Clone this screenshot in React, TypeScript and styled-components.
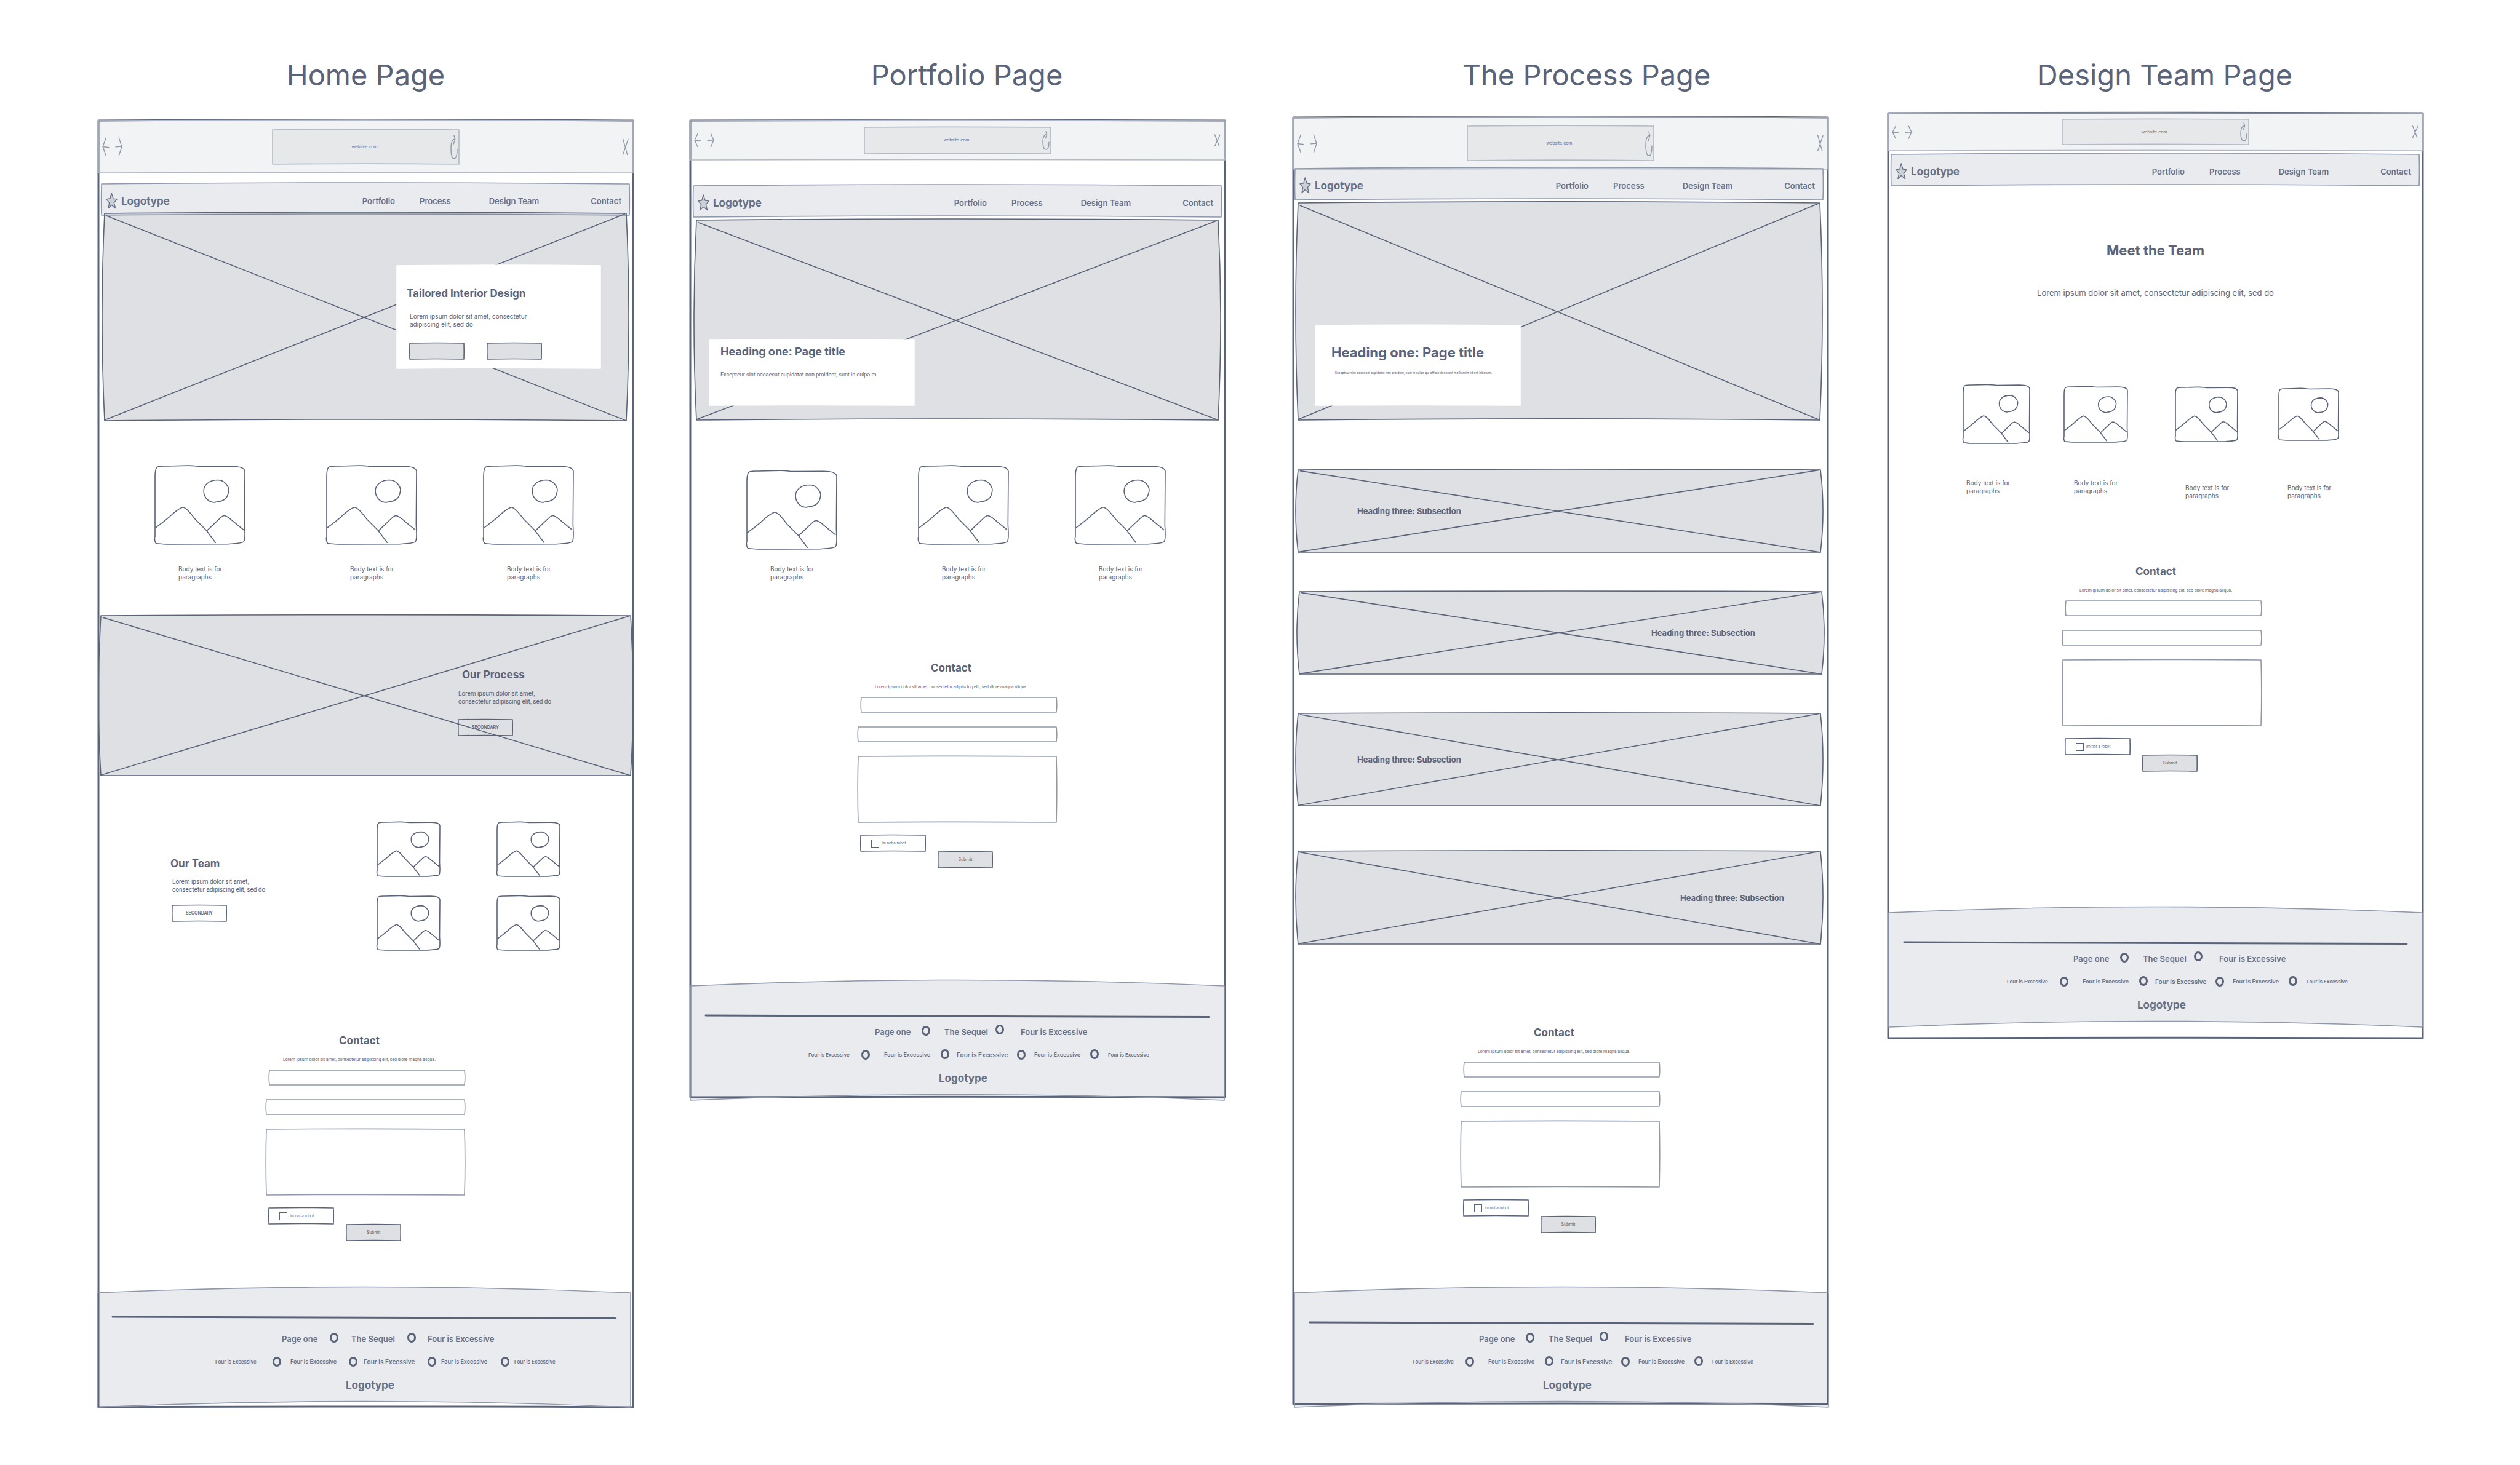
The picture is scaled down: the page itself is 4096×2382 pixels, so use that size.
import React from "react";
import styled, { createGlobalStyle } from "styled-components";

const ink = "#5a6378";
const navInk = "#667086";
const softInk = "#8f98ab";
const faintInk = "#b4bac6";
const fill = "rgba(90, 99, 120, 0.2)";
const paleFill = "rgba(90, 99, 120, 0.13)";
const barFill = "rgba(90, 99, 120, 0.08)";

const GlobalStyle = createGlobalStyle`
  * { box-sizing: border-box; }
  body { margin: 0; background: #fff; }
  h1, h2, h3, h4, p, figure { margin: 0; }
  button, input, textarea { font: inherit; color: inherit; background: transparent; border: 0; padding: 0; margin: 0; outline: 0; }
`;

/* ---------- hand-drawn outlines ---------- */

const OutlineSvg = styled.svg`
  position: absolute;
  inset: 0;
  width: 100%;
  height: 100%;
  overflow: visible;
  z-index: -1;
  pointer-events: none;
  stroke-linejoin: round;
  stroke-linecap: round;
`;

type OutlineProps = {
  stroke?: string;
  width?: number;
  fill?: string;
  top?: number;
  side?: number;
  bottom?: number;
  cross?: boolean;
};

/* A rectangle whose edges bow by a percentage of its own size. */
function Outline({ stroke = ink, width = 1.6, fill: paint = "none", top = 0, side = 0, bottom = 0, cross }: OutlineProps) {
  const edge = `M0 0 Q50 ${-top} 100 0 Q${100 + side} 50 100 100 Q50 ${100 - bottom} 0 100 Q${-side} 50 0 0Z`;
  return (
    <OutlineSvg viewBox="0 0 100 100" preserveAspectRatio="none" aria-hidden="true">
      <path d={edge} fill={paint} stroke={stroke} strokeWidth={width} vectorEffect="non-scaling-stroke" />
      {cross && (
        <path d="M0.4 1.2 L100 100 M0 99.7 L99.7 0.3" fill="none" stroke={stroke} strokeWidth={width} vectorEffect="non-scaling-stroke" />
      )}
    </OutlineSvg>
  );
}

/* ---------- board ---------- */

const Board = styled.main`
  display: flex;
  align-items: flex-start;
  padding: 92px 158px 92px 160px;
  font-family: Inter, "Liberation Sans", sans-serif;
  color: ${ink};
`;

const Column = styled.section<{ $before?: number }>`
  flex: 1;
  min-width: 0;
  margin-left: ${(p) => p.$before ?? 0}px;
`;

const ColumnTitle = styled.h1<{ $shift?: number; $below: number }>`
  font-size: 47px;
  line-height: 60px;
  font-weight: 400;
  text-align: center;
  white-space: nowrap;
  padding-left: ${(p) => p.$shift ?? 0}px;
  margin-bottom: ${(p) => p.$below}px;
`;

const Frame = styled.article<{ $tail?: number }>`
  position: relative;
  isolation: isolate;
  display: flex;
  flex-direction: column;
  padding-bottom: ${(p) => p.$tail ?? 0}px;
`;

/* ---------- browser bar ---------- */

const Toolbar = styled.div<{ $height: number }>`
  position: relative;
  isolation: isolate;
  display: grid;
  grid-template-columns: 1fr minmax(0, 303px) 1fr;
  align-items: center;
  height: ${(p) => p.$height}px;
  padding: 0 8px 0 7px;
  color: ${softInk};
`;

const Arrows = styled.div`
  display: flex;
  gap: 11px;
`;

const IconButton = styled.button`
  display: flex;
`;

const UrlBar = styled.div<{ $height: number }>`
  position: relative;
  isolation: isolate;
  display: grid;
  grid-template-columns: 1fr auto 1fr;
  align-items: center;
  height: ${(p) => p.$height}px;
  padding-right: 3px;
  font-size: 7px;
  line-height: 10px;
  color: ${navInk};
`;

const Address = styled.span`
  grid-column: 2;
`;

const BarEnd = styled.div`
  display: flex;
  justify-content: flex-end;
  color: ${softInk};
`;

const Glyph = styled.svg<{ $w: number; $h: number }>`
  display: block;
  width: ${(p) => p.$w}px;
  height: ${(p) => p.$h}px;
  overflow: visible;
  fill: none;
  stroke: currentColor;
  stroke-width: 1.4px;
  stroke-linecap: round;
  stroke-linejoin: round;
  path { vector-effect: non-scaling-stroke; }
`;

function BrowserBar({ height, url, icon, reload, close }: { height: number; url: number; icon: number; reload: number; close: number }) {
  return (
    <Toolbar $height={height}>
      <Outline stroke={faintInk} fill={barFill} top={2} bottom={2} />
      <Arrows>
        <IconButton aria-label="Back">
          <Glyph $w={10} $h={icon} viewBox="0 0 17 72" preserveAspectRatio="none">
            <path d="M9 0 L0 36 L9 72 M0 36 L17 39" />
          </Glyph>
        </IconButton>
        <IconButton aria-label="Forward">
          <Glyph $w={10} $h={icon} viewBox="0 0 17 72" preserveAspectRatio="none">
            <path d="M9 0 L17 36 L9 72 M0 37 L17 35" />
          </Glyph>
        </IconButton>
      </Arrows>
      <UrlBar $height={url}>
        <Outline stroke={faintInk} fill={barFill} top={3} bottom={3} />
        <Address>website.com</Address>
        <BarEnd>
          <IconButton aria-label="Reload">
            <Glyph $w={10} $h={reload} viewBox="0 0 18 96" preserveAspectRatio="none">
              <path d="M18 57 C18 80 16 96 9 96 C2 96 0 75 0 54 C0 30 4 14 12 16 M9 0 L12 16 L8 35" />
            </Glyph>
          </IconButton>
        </BarEnd>
      </UrlBar>
      <BarEnd>
        <IconButton aria-label="Close">
          <Glyph $w={9} $h={close} viewBox="0 0 15 64" preserveAspectRatio="none">
            <path d="M1 0 L13 63 M15 1 L1 62" />
          </Glyph>
        </IconButton>
      </BarEnd>
    </Toolbar>
  );
}

/* ---------- site navigation ---------- */

const Nav = styled.nav<{ $mt: number; $left: number; $right: number }>`
  position: relative;
  isolation: isolate;
  display: flex;
  align-items: center;
  height: 51px;
  margin: ${(p) => p.$mt}px ${(p) => p.$right}px 0 ${(p) => p.$left}px;
  padding: 4px 13px 0 8px;
  color: ${navInk};
`;

const Brand = styled.a`
  display: flex;
  align-items: center;
  gap: 7px;
  margin-right: auto;
  font-size: 17px;
  line-height: 24px;
  font-weight: 700;
  color: inherit;
  text-decoration: none;
`;

const NavLink = styled.a<{ $gap?: number }>`
  margin-left: ${(p) => p.$gap ?? 0}px;
  font-size: 13px;
  line-height: 18px;
  font-weight: 600;
  color: inherit;
  text-decoration: none;
  white-space: nowrap;
`;

function SiteNav({ mt, left = 5, right = 6 }: { mt: number; left?: number; right?: number }) {
  return (
    <Nav $mt={mt} $left={left} $right={right} aria-label="Site">
      <Outline stroke={softInk} fill={paleFill} top={8} bottom={8} side={0.1} />
      <Brand href="#home">
        <Glyph $w={17} $h={25} viewBox="0 0 29 63" preserveAspectRatio="none" aria-hidden="true">
          <path
            d="M14 0 L19 23 L29 25 L21 40 L25 62 L14 49 L5 62 L8 40 L0 25 L10 22 Z"
            fill="#cbd0d7"
          />
        </Glyph>
        Logotype
      </Brand>
      <NavLink href="#portfolio">Portfolio</NavLink>
      <NavLink href="#process" $gap={40}>Process</NavLink>
      <NavLink href="#team" $gap={62}>Design Team</NavLink>
      <NavLink href="#contact" $gap={84}>Contact</NavLink>
    </Nav>
  );
}

/* ---------- image areas ---------- */

const Hero = styled.header<{ $mt: number; $height: number; $left?: number; $right?: number }>`
  position: relative;
  isolation: isolate;
  min-height: ${(p) => p.$height}px;
  margin: ${(p) => p.$mt}px ${(p) => p.$right ?? 11}px 0 ${(p) => p.$left ?? 10}px;
  display: flex;
  align-items: flex-start;
`;

const HeroCard = styled.div<{ $x: number; $y: number; $w: number; $h: number; $pad: string }>`
  position: relative;
  isolation: isolate;
  width: ${(p) => p.$w}px;
  min-height: ${(p) => p.$h}px;
  margin: ${(p) => p.$y}px 0 0 ${(p) => p.$x}px;
  padding: ${(p) => p.$pad};
`;

const Heading = styled.h2<{ $size?: number; $line?: number; $mt?: number; $left?: number; $center?: boolean }>`
  font-size: ${(p) => p.$size ?? 17}px;
  line-height: ${(p) => p.$line ?? 24}px;
  font-weight: 700;
  white-space: nowrap;
  margin: ${(p) => p.$mt ?? 0}px 0 0 ${(p) => p.$left ?? 0}px;
  text-align: ${(p) => (p.$center ? "center" : "left")};
`;

const BandHeading = styled.h3`
  font-size: 13px;
  line-height: 18px;
  font-weight: 700;
  white-space: nowrap;
`;

const Text = styled.p<{ $size?: number; $line?: number; $mt?: number; $left?: number; $center?: boolean }>`
  font-size: ${(p) => p.$size ?? 10}px;
  line-height: ${(p) => p.$line ?? 13}px;
  white-space: nowrap;
  margin: ${(p) => p.$mt ?? 0}px 0 0 ${(p) => p.$left ?? 0}px;
  text-align: ${(p) => (p.$center ? "center" : "left")};
`;

const NarrowText = styled(Text)`
  font-family: Roboto, "Liberation Sans", sans-serif;
`;

const ButtonRow = styled.div`
  display: flex;
  gap: 38px;
  margin: 24px 0 0 5px;
`;

const SketchButton = styled.button<{ $mt?: number; $left?: number; $strong?: boolean }>`
  position: relative;
  isolation: isolate;
  display: block;
  width: 88px;
  height: 26px;
  margin: ${(p) => p.$mt ?? 0}px 0 0 ${(p) => p.$left ?? 0}px;
  font-size: 7px;
  line-height: 10px;
  font-weight: ${(p) => (p.$strong ? 600 : 400)};
`;

const Band = styled.section<{ $mt: number; $height: number; $left?: number; $right?: number; $indent: number }>`
  position: relative;
  isolation: isolate;
  display: flex;
  align-items: center;
  min-height: ${(p) => p.$height}px;
  margin: ${(p) => p.$mt}px ${(p) => p.$right ?? 12}px 0 ${(p) => p.$left ?? 8}px;
  padding-left: ${(p) => p.$indent}px;
`;

const PictureSvg = styled.svg<{ $w: number; $h: number }>`
  display: block;
  width: ${(p) => p.$w}px;
  height: ${(p) => p.$h}px;
  overflow: visible;
  fill: none;
  stroke: ${ink};
  stroke-width: 1.6px;
  stroke-linecap: round;
  stroke-linejoin: round;
  path { vector-effect: non-scaling-stroke; }
`;

function Picture({ w, h }: { w: number; h: number }) {
  return (
    <PictureSvg $w={w} $h={h} viewBox="0 0 668 580" preserveAspectRatio="none" role="img" aria-label="Image">
      <path d="M0 525 V80 C0 40 5 10 20 5 C40 -2 60 0 90 0 L240 -4 C300 -5 310 3 340 3 L560 1 C620 0 665 10 668 38 L665 430 C666 470 675 540 660 560 C650 575 580 574 540 579 L90 580 C50 578 20 575 8 573 C-2 565 -3 550 -3 530" />
      <path d="M448 269 C400 270 362 235 362 183 C362 140 400 103 470 103 C515 105 545 145 549 175 C545 215 535 262 450 266" />
      <path d="M4 457 L60 415 L105 378 C150 335 180 315 205 305 C235 310 260 345 300 395 L380 475 L450 567" />
      <path d="M388 477 L490 380 C510 362 520 365 545 380 L600 425 L658 472" />
    </PictureSvg>
  );
}

const CardRow = styled.div<{ $mt: number; $left: number }>`
  display: flex;
  align-items: flex-start;
  margin: ${(p) => p.$mt}px 0 0 ${(p) => p.$left}px;
`;

const Card = styled.figure<{ $before?: number }>`
  margin-left: ${(p) => p.$before ?? 0}px;
`;

const PictureSlot = styled.div<{ $height: number; $drop?: number }>`
  display: flex;
  align-items: center;
  height: ${(p) => p.$height}px;
  padding-top: ${(p) => p.$drop ?? 0}px;
`;

const Caption = styled.figcaption<{ $mt: number; $left: number }>`
  margin-top: ${(p) => p.$mt}px;
  padding-left: ${(p) => p.$left}px;
  font-size: 10px;
  line-height: 13px;
  white-space: nowrap;
`;

function CaptionText() {
  return (
    <>
      Body text is for
      <br />
      paragraphs
    </>
  );
}

function ThreeCards({ mt, drop = 0 }: { mt: number; drop?: number }) {
  return (
    <CardRow $mt={mt} $left={92}>
      {[0, 133, 109].map((before, i) => (
        <Card key={i} $before={before}>
          <PictureSlot $height={i === 0 ? 127 + drop : 127} $drop={i === 0 ? drop : 0}>
            <Picture w={146} h={127} />
          </PictureSlot>
          <Caption $mt={i === 0 ? 34 - drop : 34} $left={38}>
            <CaptionText />
          </Caption>
        </Card>
      ))}
    </CardRow>
  );
}

/* ---------- contact form ---------- */

const ContactForm = styled.form<{ $mt: number; $left: number }>`
  width: 322px;
  margin: ${(p) => p.$mt}px 0 0 ${(p) => p.$left}px;
`;

const ContactHead = styled.div`
  padding-right: 20px;
`;

const Field = styled.div<{ $mt: number; $height: number; $left?: number }>`
  position: relative;
  isolation: isolate;
  display: flex;
  height: ${(p) => p.$height}px;
  margin: ${(p) => p.$mt}px 0 0 ${(p) => p.$left ?? 0}px;
`;

const TextInput = styled.input`
  flex: 1;
  padding: 0 6px;
  font-size: 10px;
`;

const TextArea = styled.textarea`
  flex: 1;
  padding: 6px;
  font-size: 10px;
  resize: none;
`;

const RobotCheck = styled.label`
  position: relative;
  isolation: isolate;
  display: flex;
  align-items: center;
  gap: 4px;
  width: 105px;
  height: 26px;
  margin: 21px 0 0 4px;
  padding-left: 17px;
  font-size: 6px;
  line-height: 8px;
`;

const CheckBox = styled.input`
  appearance: none;
  width: 13px;
  height: 13px;
  border: 1px solid ${ink};
`;

function Contact({ mt, left = 273 }: { mt: number; left?: number }) {
  return (
    <ContactForm $mt={mt} $left={left}>
      <ContactHead>
        <Heading $center>Contact</Heading>
        <NarrowText $size={7} $line={12} $mt={13} $center>
          Lorem ipsum dolor sit amet, consectetur adipiscing elit, sed dlore magna aliqua.
        </NarrowText>
      </ContactHead>
      <Field $mt={11} $height={24} $left={5}>
        <Outline stroke={softInk} side={0.5} />
        <TextInput type="text" aria-label="Name" />
      </Field>
      <Field $mt={24} $height={24}>
        <Outline stroke={softInk} side={0.5} />
        <TextInput type="email" aria-label="Email" />
      </Field>
      <Field $mt={24} $height={107}>
        <Outline stroke={softInk} side={0.5} top={1.2} bottom={1.2} />
        <TextArea aria-label="Message" />
      </Field>
      <RobotCheck>
        <Outline top={4} bottom={4} side={0.5} />
        <CheckBox type="checkbox" />
        Im not a robot
      </RobotCheck>
      <SketchButton type="button" $mt={1} $left={130}>
        <Outline fill={fill} top={4} bottom={4} side={0.5} />
        Submit
      </SketchButton>
    </ContactForm>
  );
}

/* ---------- footer ---------- */

const FooterBox = styled.footer<{ $mt: number; $mb?: number; $left?: number; $right?: number }>`
  position: relative;
  isolation: isolate;
  min-height: 186px;
  margin: ${(p) => p.$mt}px ${(p) => p.$right ?? 0}px ${(p) => p.$mb ?? 0}px ${(p) => p.$left ?? 0}px;
  padding: 0 25px 24px;
  color: ${navInk};
`;

const Rule = styled.svg<{ $above: number; $below: number }>`
  display: block;
  width: 100%;
  height: 4px;
  margin: ${(p) => p.$above}px 0 ${(p) => p.$below}px;
  overflow: visible;
  stroke: ${ink};
  stroke-width: 3px;
  stroke-linecap: round;
`;

const FooterBody = styled.div`
  display: flow-root;
`;

const LinkRow = styled.div<{ $columns: string; $left: number; $mt?: number; $height: number }>`
  display: grid;
  grid-template-columns: ${(p) => p.$columns};
  align-items: center;
  height: ${(p) => p.$height}px;
  margin: ${(p) => p.$mt ?? 0}px 0 0 ${(p) => p.$left}px;
`;

const FooterLink = styled.a<{ $size: number }>`
  font-size: ${(p) => p.$size}px;
  line-height: 18px;
  font-weight: 600;
  color: inherit;
  text-decoration: none;
  white-space: nowrap;
`;

const Dot = styled.span<{ $raised?: boolean; $lift?: number }>`
  width: 14px;
  height: 16px;
  border: 3px solid ${ink};
  border-radius: 50%;
  align-self: ${(p) => (p.$raised ? "start" : "center")};
  margin-bottom: ${(p) => (p.$raised ? 0 : p.$lift ?? 0)}px;
`;

const FooterLogo = styled.div`
  margin: 17px 0 0 379px;
  font-size: 17px;
  line-height: 24px;
  font-weight: 700;
`;

type FooterProps = { mt: number; mb?: number; left?: number; right?: number; even?: boolean };

function Footer({ mt, mb, left, right, even }: FooterProps) {
  const topColumns = even ? "78px 35px 91px 33px auto" : "76px 37px 83px 41px auto";
  const lowColumns = even
    ? "93px 29px 95px 24px 104px 22px 97px 22px auto"
    : "86px 37px 92px 26px 98px 28px 91px 29px auto";
  return (
    <FooterBox $mt={mt} $mb={mb} $left={left} $right={right}>
      <Outline stroke={softInk} fill={paleFill} top={10.2} bottom={10.2} />
      <FooterBody>
        <Rule $above={even ? 38 : 47} $below={even ? 21 : 12} viewBox="0 0 100 4" preserveAspectRatio="none" aria-hidden="true">
          <path d="M0 1 L100 3.5" vectorEffect="non-scaling-stroke" />
        </Rule>
        <LinkRow $columns={topColumns} $left={275} $height={24}>
          <FooterLink href="#one" $size={13}>Page one</FooterLink>
          <Dot $lift={4} />
          <FooterLink href="#two" $size={13}>The Sequel</FooterLink>
          <Dot $lift={4} $raised={!even} />
          <FooterLink href="#four" $size={13}>Four is Excessive</FooterLink>
        </LinkRow>
        <LinkRow $columns={lowColumns} $left={167} $mt={16} $height={18}>
          <FooterLink href="#a" $size={8}>Four is Excessive</FooterLink>
          <Dot />
          <FooterLink href="#b" $size={9}>Four is Excessive</FooterLink>
          <Dot $raised={!even} />
          <FooterLink href="#c" $size={10}>Four is Excessive</FooterLink>
          <Dot />
          <FooterLink href="#d" $size={9}>Four is Excessive</FooterLink>
          <Dot $raised={!even} />
          <FooterLink href="#e" $size={8}>Four is Excessive</FooterLink>
        </LinkRow>
        <FooterLogo>Logotype</FooterLogo>
      </FooterBody>
    </FooterBox>
  );
}

/* ---------- pages ---------- */

const ProcessPanel = styled.section`
  position: relative;
  isolation: isolate;
  min-height: 260px;
  margin: 56px 4px 0;
  padding: 84px 0 0 581px;
`;

const TeamSection = styled.section`
  display: grid;
  grid-template-columns: 336px auto;
  margin: 76px 0 0 117px;
`;

const TeamIntro = styled.div`
  padding-top: 55px;
`;

const TeamGrid = styled.div`
  display: grid;
  grid-template-columns: 102px 102px;
  gap: 32px 93px;
`;

function Secondary({ mt, left = 0 }: { mt: number; left?: number }) {
  return (
    <SketchButton type="button" $strong $mt={mt} $left={left}>
      <Outline top={4} bottom={4} side={0.5} />
      SECONDARY
    </SketchButton>
  );
}

function HomePage() {
  return (
    <Frame>
      <Outline width={3} top={0.1} bottom={0.1} />
      <BrowserBar height={85} url={56} icon={29} reload={38} close={26} />
      <SiteNav mt={18} />
      <Hero $mt={-3} $height={337}>
        <Outline fill={fill} top={1.2} bottom={1.2} side={0.95} cross />
        <HeroCard $x={475} $y={85} $w={331} $h={167} $pad="33px 0 0 16px">
          <Outline fill="#fff" stroke="#fff" top={1} bottom={1} />
          <Heading>Tailored Interior Design</Heading>
          <Text $mt={19} $left={5}>
            Lorem ipsum dolor sit amet, consectetur
            <br />
            adipiscing elit, sed do
          </Text>
          <ButtonRow>
            <SketchButton type="button" aria-label="Primary action">
              <Outline fill={fill} top={4} bottom={4} side={0.5} />
            </SketchButton>
            <SketchButton type="button" aria-label="Secondary action">
              <Outline fill={fill} top={4} bottom={4} side={0.5} />
            </SketchButton>
          </ButtonRow>
        </HeroCard>
      </Hero>
      <ThreeCards mt={74} />
      <ProcessPanel>
        <Outline fill={fill} top={1} side={0.95} cross />
        <Heading $left={6}>Our Process</Heading>
        <NarrowText $mt={12}>
          Lorem ipsum dolor sit amet,
          <br />
          consectetur adipiscing elit, sed do
        </NarrowText>
        <Secondary mt={23} />
      </ProcessPanel>
      <TeamSection>
        <TeamIntro>
          <Heading>Our Team</Heading>
          <NarrowText $mt={11} $left={3}>
            Lorem ipsum dolor sit amet,
            <br />
            consectetur adipiscing elit, sed do
          </NarrowText>
          <Secondary mt={19} left={3} />
        </TeamIntro>
        <TeamGrid>
          {[1, 2, 3, 4].map((n) => (
            <Picture key={n} w={102} h={88} />
          ))}
        </TeamGrid>
      </TeamSection>
      <Contact mt={135} />
      <Footer mt={85} left={-2} right={4} even />
    </Frame>
  );
}

function PortfolioPage() {
  return (
    <Frame>
      <Outline width={3} top={0.1} bottom={0.1} />
      <BrowserBar height={64} url={43} icon={22} reload={29} close={19} />
      <SiteNav mt={42} />
      <Hero $mt={5} $height={325}>
        <Outline fill={fill} top={1.2} bottom={1.2} side={0.95} cross />
        <HeroCard $x={21} $y={195} $w={333} $h={106} $pad="7px 0 0 18px">
          <Outline fill="#fff" stroke="#fff" top={1} bottom={1} />
          <Heading $size={18}>Heading one: Page title</Heading>
          <NarrowText $size={9} $line={12} $mt={19}>
            Excepteur sint occaecat cupidatat non proident, sunt in culpa m.
          </NarrowText>
        </HeroCard>
      </Hero>
      <ThreeCards mt={75} drop={8} />
      <Contact mt={129} />
      <Footer mt={192} mb={-5} right={1} />
    </Frame>
  );
}

function ProcessPage() {
  return (
    <Frame>
      <Outline width={3} top={0.1} bottom={0.1} />
      <BrowserBar height={84} url={56} icon={29} reload={39} close={26} />
      <SiteNav mt={-1} left={3} right={8} />
      <Hero $mt={5} $height={353} $left={8} $right={13}>
        <Outline fill={fill} top={1.2} bottom={1.2} side={0.95} cross />
        <HeroCard $x={28} $y={199} $w={333} $h={130} $pad="30px 0 0 26px">
          <Outline fill="#fff" stroke="#fff" top={1} bottom={1} />
          <Heading $size={22} $line={28}>Heading one: Page title</Heading>
          <Text $size={5} $line={8} $mt={15} $left={6}>
            Excepteur sint occaecat cupidatat non proident, sunt in culpa qui officia deserunt mollit anim id est laborum.
          </Text>
        </HeroCard>
      </Hero>
      <Band $mt={81} $height={134} $indent={96}>
        <Outline fill={fill} top={1.5} side={0.95} cross />
        <BandHeading>Heading three: Subsection</BandHeading>
      </Band>
      <Band $mt={64} $height={134} $left={10} $right={10} $indent={572}>
        <Outline fill={fill} top={1.5} side={0.95} cross />
        <BandHeading>Heading three: Subsection</BandHeading>
      </Band>
      <Band $mt={64} $height={150} $indent={96}>
        <Outline fill={fill} top={1.5} side={0.95} cross />
        <BandHeading>Heading three: Subsection</BandHeading>
      </Band>
      <Band $mt={74} $height={151} $indent={621}>
        <Outline fill={fill} top={1.5} side={0.95} cross />
        <BandHeading>Heading three: Subsection</BandHeading>
      </Band>
      <Contact mt={132} />
      <Footer mt={98} mb={-5} left={2} right={-1} />
    </Frame>
  );
}

const members = [
  { w: 108, h: 95, before: 0, indent: 5, drop: 58 },
  { w: 103, h: 90, before: 56, indent: 16, drop: 58 },
  { w: 101, h: 88, before: 78, indent: 16, drop: 66 },
  { w: 97, h: 84, before: 67, indent: 14, drop: 66 },
];

function TeamPage() {
  return (
    <Frame $tail={18}>
      <Outline width={3} top={0.1} bottom={0.1} />
      <BrowserBar height={61} url={41} icon={20} reload={29} close={19} />
      <SiteNav mt={6} />
      <Heading $size={22} $line={28} $mt={91} $center>Meet the Team</Heading>
      <Text $size={13} $line={16} $mt={47} $center>
        Lorem ipsum dolor sit amet, consectetur adipiscing elit, sed do
      </Text>
      <CardRow $mt={142} $left={122}>
        {members.map((m, i) => (
          <Card key={i} $before={m.before}>
            <PictureSlot $height={95}>
              <Picture w={m.w} h={m.h} />
            </PictureSlot>
            <Caption $mt={m.drop} $left={m.indent}>
              <CaptionText />
            </Caption>
          </Card>
        ))}
      </CardRow>
      <Contact mt={104} left={284} />
      <Footer mt={230} left={1} right={1} />
    </Frame>
  );
}

export default function App() {
  return (
    <>
      <GlobalStyle />
      <Board>
        <Column>
          <ColumnTitle $below={44}>Home Page</ColumnTitle>
          <HomePage />
        </Column>
        <Column $before={93}>
          <ColumnTitle $shift={30} $below={44}>Portfolio Page</ColumnTitle>
          <PortfolioPage />
        </Column>
        <Column $before={111}>
          <ColumnTitle $shift={84} $below={39}>The Process Page</ColumnTitle>
          <ProcessPage />
        </Column>
        <Column $before={98}>
          <ColumnTitle $shift={30} $below={32}>Design Team Page</ColumnTitle>
          <TeamPage />
        </Column>
      </Board>
    </>
  );
}
